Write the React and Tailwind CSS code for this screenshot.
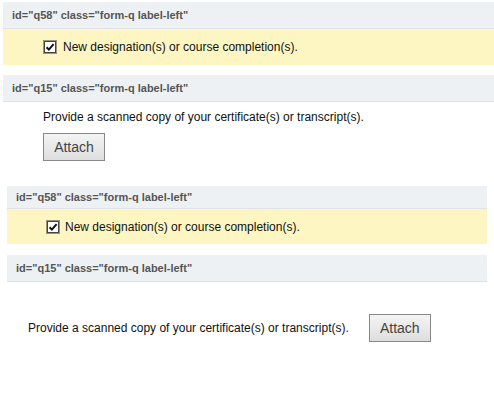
const font = { fontFamily: '"Liberation Sans", Arial, sans-serif' }

function Header({ id }) {
  return (
    <div className="flex items-center bg-[#eef1f4] border-b border-[#dfe3e8] text-[11px] font-bold text-[#555] h-full">
      id="{id}" class="form-q label-left"
    </div>
  )
}

function CheckBox() {
  return (
    <svg width="14" height="14" viewBox="0 0 14 14" className="shrink-0">
      <rect x="0.5" y="0.5" width="13" height="13" fill="none" stroke="#333" strokeDasharray="1 1" />
      <rect x="1.5" y="1.5" width="11" height="11" fill="#fff" stroke="#444" />
      <path d="M3.6 7.2 L5.9 9.6 L10.6 4.2" fill="none" stroke="#111" strokeWidth="2" />
    </svg>
  )
}

function AttachButton() {
  return (
    <button className="w-[62px] h-[28px] border border-[#888] bg-gradient-to-b from-[#f4f4f4] to-[#dedede] text-[14px] text-[#444]">
      Attach
    </button>
  )
}

export default function App() {
  return (
    <div className="w-[494px] h-[400px] bg-white text-[12px] text-[#111]" style={font}>
      <div className="pl-[3px] pt-[2px]">
        <div className="h-[27px] [&>div]:pl-[9px]">
          <Header id="q58" />
        </div>
        <div className="h-[36px] bg-[#fdf6c3] flex items-center gap-[6px] pl-[40px] pb-[1px]">
          <CheckBox />
          <span>New designation(s) or course completion(s).</span>
        </div>
        <div className="h-[27px] mt-[10px] [&>div]:pl-[9px]">
          <Header id="q15" />
        </div>
        <div className="pl-[40px] pt-[8px]">
          <div className="leading-[14px]">Provide a scanned copy of your certificate(s) or transcript(s).</div>
          <div className="mt-[9px]">
            <AttachButton />
          </div>
        </div>
      </div>
      <div className="px-[7px] mt-[25px]">
        <div className="h-[23px] [&>div]:pl-[9px]">
          <Header id="q58" />
        </div>
        <div className="h-[35px] bg-[#fdf6c3] flex items-center gap-[5px] pl-[39px]">
          <CheckBox />
          <span>New designation(s) or course completion(s).</span>
        </div>
        <div className="h-[27px] mt-[11px] [&>div]:pl-[9px]">
          <Header id="q15" />
        </div>
        <div className="flex items-center pl-[21px] pt-[32px] gap-[20px]">
          <span>Provide a scanned copy of your certificate(s) or transcript(s).</span>
          <AttachButton />
        </div>
      </div>
    </div>
  )
}
